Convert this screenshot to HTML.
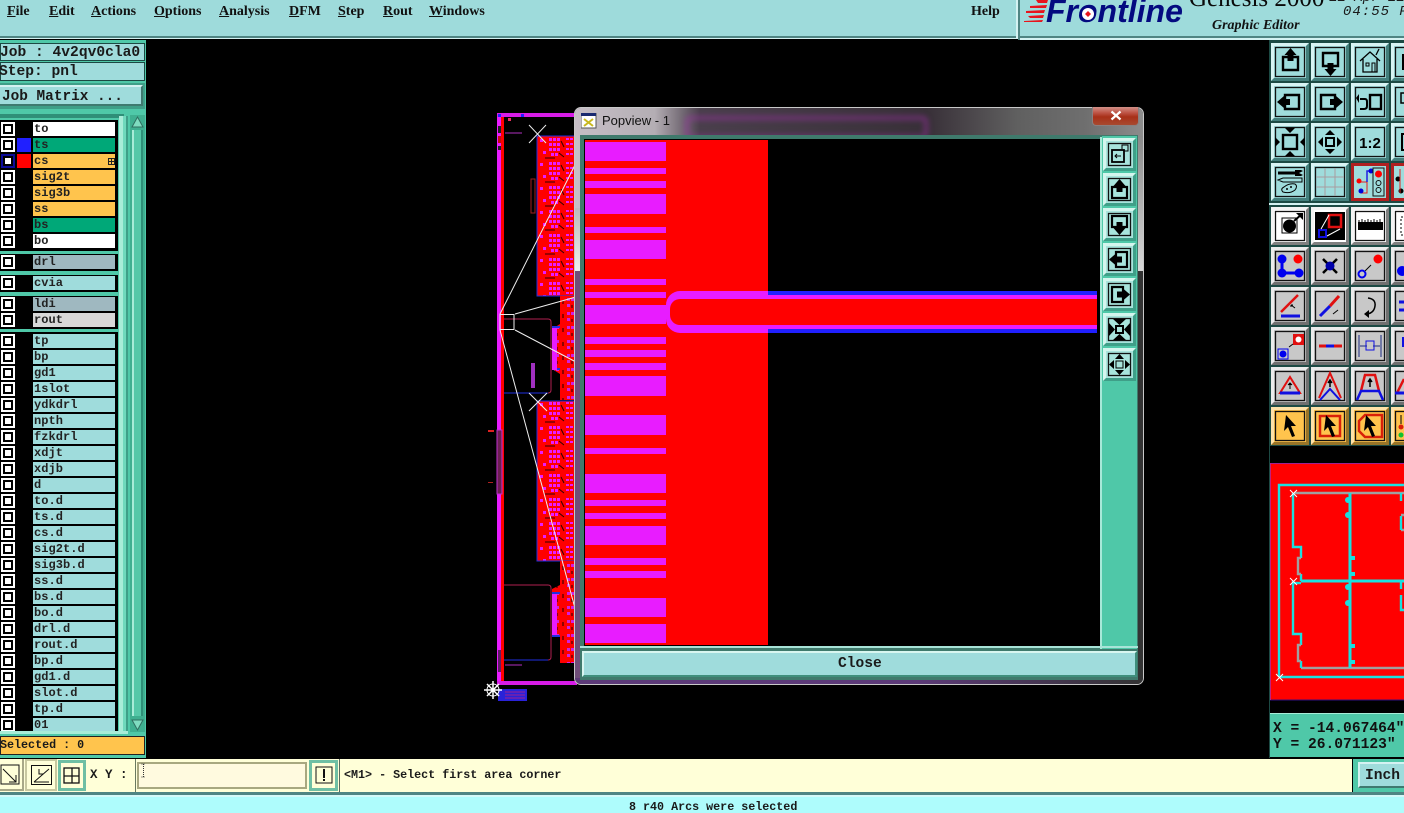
<!DOCTYPE html>
<html><head><meta charset="utf-8"><title>Genesis 2000</title>
<style>
html,body{margin:0;padding:0;background:#000;width:1404px;height:813px;overflow:hidden}
#r{position:relative;width:1404px;height:813px;overflow:hidden;background:#000}
#r div,#r span.a,#r svg.a{position:absolute}
.m{font:bold 14px/16px "Liberation Serif",serif;color:#111;top:4px;white-space:nowrap}
.mono{font-family:"Liberation Mono",monospace;font-weight:bold;color:#1a1a1a;white-space:pre}
.j{font-size:14.6px;line-height:16px}
.l{left:33px;width:82px;height:14px;font:bold 12px/14px "Liberation Mono",monospace;color:#222;text-indent:1px;letter-spacing:.05px;white-space:pre;overflow:hidden}
.c{left:1px;width:14px;height:14px;background:#fff}
.c:after{content:"";position:absolute;left:2px;top:2px;width:6px;height:6px;border:2px solid #000;background:#fff}
.t{background:#9fdcdc}.g{background:#00a878}.o{background:#ffc44d}.w{background:#fff}.s{background:#9fb8c0}
.bt{box-sizing:border-box;width:38px;height:38px;border:3px solid;border-color:#d8f4f4 #437f7c #437f7c #d8f4f4;background:#9fdcdc}
.gy{border-color:#ececec #707070 #707070 #ececec;background:#c8c8c8}
.wh{border-color:#f4f4f4 #808080 #808080 #f4f4f4;background:#fff}
.yl{border-color:#ffe2a8 #987428 #987428 #ffe2a8;background:#ffc44d}
.pb{box-sizing:border-box;width:33px;height:33px;border:3px solid;border-color:#d4f6ee #3f9f88 #3f9f88 #d4f6ee;background:#a8e4dc}
.bt svg,.pb svg{position:absolute;left:-3px;top:-3px;width:38px;height:38px;overflow:visible}
.pb svg{width:33px;height:33px}
.bt svg>rect:first-child,.pb svg>rect:first-child{stroke-width:1.3}
</style></head><body>
<div id="r">

<!-- PCB behind -->
<svg class="a" style="left:0;top:0" width="1404" height="813" viewBox="0 0 1404 813">
<defs>
<pattern id="pc" x="537" y="136" width="38" height="24" patternUnits="userSpaceOnUse">
<rect width="38" height="24" fill="#f00"/>
<g fill="#e81cff">
<rect x="3" y="3" width="3" height="3"/>
<rect x="12" y="2" width="3" height="3"/><rect x="16" y="2" width="3" height="3"/><rect x="20" y="2" width="3" height="3"/>
<rect x="12" y="7" width="3" height="3"/><rect x="16" y="7" width="3" height="3"/><rect x="20" y="7" width="3" height="3"/>
<rect x="12" y="12" width="3" height="3"/><rect x="16" y="12" width="3" height="3"/><rect x="20" y="12" width="3" height="3"/>
<rect x="14" y="17" width="3" height="3"/><rect x="18" y="17" width="3" height="3"/>
<rect x="29" y="2" width="3" height="2"/><rect x="33" y="2" width="3" height="2"/><rect x="29" y="7" width="3" height="2"/><rect x="33" y="7" width="3" height="2"/><rect x="29" y="12" width="3" height="2"/><rect x="33" y="12" width="3" height="2"/><rect x="29" y="17" width="3" height="2"/><rect x="33" y="17" width="3" height="2"/>
<rect x="6" y="15" width="3" height="3"/>
</g>
<path d="M8 22h10M24 5l3 6M22 17l5 4" stroke="#300" stroke-width="1"/>
</pattern>
<pattern id="pd" x="560" y="296" width="15" height="14" patternUnits="userSpaceOnUse">
<rect width="15" height="14" fill="#f00"/>
<g fill="#d020e0"><rect x="7" y="2" width="3" height="3"/><rect x="11" y="2" width="3" height="3"/><rect x="7" y="8" width="3" height="3"/></g>
<path d="M3 4v4M12 9v3" stroke="#200"/>
</pattern>
</defs>
<rect x="497" y="113" width="4" height="572" fill="#e81cff"/>
<rect x="501" y="117" width="3" height="564" fill="#f00"/>
<rect x="497" y="113" width="80" height="4" fill="#d81ce8"/>
<rect x="497" y="681" width="80" height="4" fill="#d81ce8"/>
<rect x="498" y="114" width="3" height="3" fill="#2020ff"/><rect x="521" y="114" width="3" height="3" fill="#2020ff"/>
<rect x="508" y="118" width="3" height="3" fill="#f03060"/>
<rect x="498" y="126" width="3" height="7" fill="#222"/><rect x="498" y="136" width="3" height="7" fill="#c01010"/><rect x="498" y="146" width="3" height="4" fill="#222"/>
<path d="M505 133h17" stroke="#b030c0"/>
<path d="M505 665h17" stroke="#b030c0"/>
<rect x="498" y="650" width="3" height="22" fill="#222" opacity=".7"/>
<!-- red block 1 -->
<path d="M537 136h40v160h-40z" fill="url(#pc)" stroke="#2030e0"/>
<path d="M560 296h17v104h-17v-26l-8 -5v-40l8 -5z" fill="url(#pd)"/>
<rect x="552" y="328" width="5" height="42" fill="#e81cff"/>
<path d="M552 327h8M552 369h8" stroke="#2030e0" stroke-width="2"/>
<path d="M504 319h44q3 0 3 3v68q0 3-3 3h-44" fill="#000" stroke="#b02050"/>
<path d="M504 393h44" stroke="#2030e0"/>
<path d="M552 328h5v42h-5z" fill="#e81cff"/>
<rect x="531" y="179" width="4" height="34" fill="none" stroke="#a02020"/>
<rect x="531" y="363" width="4" height="25" fill="#a030c0"/>
<!-- red block 2 -->
<path d="M537 401h40v160h-40z" fill="url(#pc)" stroke="#2030e0"/>
<path d="M560 561h17v102h-17v-26l-8 -4v-44l8 -4z" fill="url(#pd)"/>
<path d="M504 585h44q3 0 3 3v69q0 3-3 3h-44" fill="#000" stroke="#b02050"/>
<path d="M504 660h44" stroke="#2030e0"/>
<rect x="552" y="593" width="5" height="43" fill="#e81cff"/>
<path d="M552 593h8M552 636h8" stroke="#2030e0" stroke-width="2"/>
<!-- marks -->
<rect x="497" y="430" width="5" height="64" fill="#6a2050" stroke="#c030d0"/>
<rect x="488" y="430" width="6" height="2" fill="#e02020"/><rect x="488" y="482" width="5" height="1" fill="#b02020"/>
<rect x="498" y="689" width="29" height="12" fill="#2a22d8"/>
<path d="M505 692h20M505 695h20M505 698h20" stroke="#a02090"/>
<!-- white lines -->
<g stroke="#eee" fill="none" stroke-width="1">
<path d="M529 125l17 18M546 125l-17 18"/>
<path d="M529 393l9 9 9-9M529 411l9-9 9 9"/>
<rect x="500" y="314.500" width="14" height="15"/>
<path d="M500 314L576 163M515 314L576 297M515 330L576 362M500 330L576 612"/>
</g>
<g stroke="#fff" stroke-width="1.500"><path d="M484 690h18M493 681v18M487 684l12 12M499 684l-12 12"/></g>
<circle cx="493" cy="690" r="6" fill="none" stroke="#fff"/>
</svg>

<!-- top bar -->
<div style="left:0;top:0;width:1404px;height:36px;background:#9edbdb"></div>
<div style="left:0;top:36px;width:1404px;height:2px;background:#4f8583"></div>
<div style="left:0;top:38px;width:1404px;height:1px;background:#d4f2f2"></div>
<div style="left:1016px;top:0;width:2px;height:38px;background:#d4f2f2"></div>
<div style="left:1018px;top:0;width:2px;height:40px;background:#4f8583"></div>
<div style="left:1020px;top:38px;width:384px;height:2px;background:#d4f2f2"></div>
<div class="m" style="left:7px"><u>F</u>ile</div>
<div class="m" style="left:49px"><u>E</u>dit</div>
<div class="m" style="left:91px"><u>A</u>ctions</div>
<div class="m" style="left:154px"><u>O</u>ptions</div>
<div class="m" style="left:219px"><u>A</u>nalysis</div>
<div class="m" style="left:289px"><u>D</u>FM</div>
<div class="m" style="left:338px"><u>S</u>tep</div>
<div class="m" style="left:383px"><u>R</u>out</div>
<div class="m" style="left:429px"><u>W</u>indows</div>
<div class="m" style="left:971px">Help</div>
<svg class="a" style="left:1024px;top:0" width="24" height="24"><g fill="#e8141c"><path d="M12 0h12l-1 3h-9zM6 6l17-1-1 3H6zM2 11l19-1-1 3H2zM4 16l16-1-1 3H6zM0 21l19-1-1 2H0z"/></g></svg>
<div style="left:1046px;top:-6px;font:italic bold 32px/34px 'Liberation Sans',sans-serif;color:#040a80;white-space:nowrap">Frontline</div>
<svg class="a" style="left:1079px;top:5px" width="18" height="18"><circle cx="9" cy="9" r="7" fill="#fff" stroke="#040a80" stroke-width="2"/><path d="M9 6l3 3-3 3-3-3z" fill="#e8141c"/></svg>
<div style="left:1189px;top:-15px;font:25px/28px 'Liberation Serif',serif;color:#0a0a0a;white-space:nowrap">Genesis 2000</div>
<div style="left:1212px;top:18px;font:italic bold 14px/16px 'Liberation Serif',serif;color:#111;white-space:nowrap">Graphic Editor</div>
<div class="mono" style="left:1329px;top:-9px;font-size:14px;line-height:14px;font-style:italic;font-weight:normal">11 Apr 11</div>
<div class="mono" style="left:1343px;top:4px;font-size:14px;line-height:16px;font-style:italic;letter-spacing:1px;font-weight:normal">04:55 P</div>

<!-- left panel -->
<div style="left:0;top:40px;width:146px;height:718px;background:#4fc8a8"></div>
<div style="left:0;top:43px;width:145px;height:18px;background:#9fdcdc;box-shadow:inset 0 0 0 1px #1c4a44"></div>
<div style="left:0;top:62px;width:145px;height:19px;background:#9fdcdc;box-shadow:inset 0 0 0 1px #1c4a44"></div>
<div class="mono j" style="left:0;top:45px">Job : 4v2qv0cla0</div>
<div class="mono j" style="left:-1px;top:64px">Step: pnl</div>
<div style="left:0;top:83px;width:145px;height:26px;background:#3f9f88"></div>
<div style="left:0;top:85px;width:143px;height:21px;box-sizing:border-box;border:2px solid;border-color:#d4f2f2 #3f7a70 #3f7a70 #d4f2f2;border-left:0;background:#9fdcdc"></div>
<div class="mono j" style="left:2px;top:89px;font-size:14.4px">Job Matrix ...</div>

<div style="left:0;top:114px;width:124px;height:4px;background:#2f8f78"></div>
<!-- list black groups -->
<div style="left:0;top:120px;width:118px;height:131px;background:#000"></div>
<div style="left:0;top:254px;width:118px;height:17px;background:#000"></div>
<div style="left:0;top:275px;width:118px;height:17px;background:#000"></div>
<div style="left:0;top:296px;width:118px;height:33px;background:#000"></div>
<div style="left:0;top:332px;width:118px;height:399px;background:#000"></div>
<div style="left:119px;top:116px;width:4px;height:617px;background:#a8ecd8"></div>
<div style="left:123px;top:116px;width:3px;height:617px;background:#6fd8bc"></div>
<div style="left:126px;top:116px;width:2px;height:617px;background:#3f9f88"></div>
<div style="left:0;top:731px;width:128px;height:3px;background:#a8ecd8"></div>
<div style="left:130px;top:115px;width:15px;height:617px;background:#3faf90"></div>
<div style="left:132px;top:130px;width:11px;height:586px;background:#55c8a8;box-shadow:inset 2px 0 0 #a8ecd8,inset -2px 0 0 #2f8f78"></div>
<svg class="a" style="left:130px;top:115px" width="15" height="14"><path d="M7.500 2L13 12H2z" fill="#7fdcc0" stroke="#2f6f60"/></svg>
<svg class="a" style="left:130px;top:718px" width="15" height="14"><path d="M7.500 12L13 2H2z" fill="#7fdcc0" stroke="#2f6f60"/></svg>

<!-- checkboxes and rows -->
<div class="c" style="top:122px"></div><div class="l w" style="top:122px">to</div>
<div class="c" style="top:138px"></div><div style="left:17px;top:138px;width:14px;height:14px;background:#2020ff"></div><div class="l g" style="top:138px">ts</div>
<div class="c" style="top:154px;background:#0c0c98"></div><div style="left:17px;top:154px;width:14px;height:14px;background:#f00"></div><div class="l o" style="top:154px">cs<span style="position:absolute;left:75px;top:4px;width:5px;height:5px;border:1px solid #222;background:linear-gradient(#222,#222) center/1px 100% no-repeat,linear-gradient(#222,#222) center/100% 1px no-repeat"></span></div>
<div class="c" style="top:170px"></div><div class="l o" style="top:170px">sig2t</div>
<div class="c" style="top:186px"></div><div class="l o" style="top:186px">sig3b</div>
<div class="c" style="top:202px"></div><div class="l o" style="top:202px">ss</div>
<div class="c" style="top:218px"></div><div class="l g" style="top:218px">bs</div>
<div class="c" style="top:234px"></div><div class="l w" style="top:234px">bo</div>
<div class="c" style="top:255px"></div><div class="l s" style="top:255px">drl</div>
<div class="c" style="top:276px"></div><div class="l t" style="top:276px">cvia</div>
<div class="c" style="top:297px"></div><div class="l s" style="top:297px">ldi</div>
<div class="c" style="top:313px"></div><div class="l" style="top:313px;background:#d8d8d8">rout</div>
<div class="c" style="top:334px"></div><div class="l t" style="top:334px">tp</div>
<div class="c" style="top:350px"></div><div class="l t" style="top:350px">bp</div>
<div class="c" style="top:366px"></div><div class="l t" style="top:366px">gd1</div>
<div class="c" style="top:382px"></div><div class="l t" style="top:382px">1slot</div>
<div class="c" style="top:398px"></div><div class="l t" style="top:398px">ydkdrl</div>
<div class="c" style="top:414px"></div><div class="l t" style="top:414px">npth</div>
<div class="c" style="top:430px"></div><div class="l t" style="top:430px">fzkdrl</div>
<div class="c" style="top:446px"></div><div class="l t" style="top:446px">xdjt</div>
<div class="c" style="top:462px"></div><div class="l t" style="top:462px">xdjb</div>
<div class="c" style="top:478px"></div><div class="l t" style="top:478px">d</div>
<div class="c" style="top:494px"></div><div class="l t" style="top:494px">to.d</div>
<div class="c" style="top:510px"></div><div class="l t" style="top:510px">ts.d</div>
<div class="c" style="top:526px"></div><div class="l t" style="top:526px">cs.d</div>
<div class="c" style="top:542px"></div><div class="l t" style="top:542px">sig2t.d</div>
<div class="c" style="top:558px"></div><div class="l t" style="top:558px">sig3b.d</div>
<div class="c" style="top:574px"></div><div class="l t" style="top:574px">ss.d</div>
<div class="c" style="top:590px"></div><div class="l t" style="top:590px">bs.d</div>
<div class="c" style="top:606px"></div><div class="l t" style="top:606px">bo.d</div>
<div class="c" style="top:622px"></div><div class="l t" style="top:622px">drl.d</div>
<div class="c" style="top:638px"></div><div class="l t" style="top:638px">rout.d</div>
<div class="c" style="top:654px"></div><div class="l t" style="top:654px">bp.d</div>
<div class="c" style="top:670px"></div><div class="l t" style="top:670px">gd1.d</div>
<div class="c" style="top:686px"></div><div class="l t" style="top:686px">slot.d</div>
<div class="c" style="top:702px"></div><div class="l t" style="top:702px">tp.d</div>
<div class="c" style="top:718px;height:13px;overflow:hidden"></div><div class="l t" style="top:718px;height:13px">01</div>

<div style="left:0;top:736px;width:145px;height:19px;box-sizing:border-box;border:1px solid #222;background:#ffc44d"></div>
<div class="mono" style="left:0;top:738px;font-size:11.700px;line-height:15px">Selected : 0</div>

<!-- right toolbar -->
<div style="left:1269px;top:40px;width:135px;height:167px;background:#1c4a44"></div>
<div style="left:1269px;top:203px;width:135px;height:2px;background:#d4f2f2"></div>
<div style="left:1269px;top:205px;width:135px;height:241px;background:#1c4a44"></div>
<div style="left:1269px;top:446px;width:1px;height:312px;background:#1c4a44"></div>

<div class="bt" style="left:1271px;top:43px"><svg viewBox="0 0 38 38"><rect x="4.500" y="4.500" width="29" height="29" fill="none" stroke="#111"/><path d="M12 14h15v13H12z" fill="none" stroke="#000" stroke-width="2.400"/><path d="M19.500 5l6 7h-3v6h-6v-6h-3z"/></svg></div>
<div class="bt" style="left:1311px;top:43px"><svg viewBox="0 0 38 38"><rect x="4.500" y="4.500" width="29" height="29" fill="none" stroke="#111"/><path d="M12 10h15v13H12z" fill="none" stroke="#000" stroke-width="2.400"/><path d="M19.500 33l-6-7h3v-6h6v6h3z"/></svg></div>
<div class="bt" style="left:1351px;top:43px"><svg viewBox="0 0 38 38"><rect x="4.500" y="4.500" width="29" height="29" fill="none" stroke="#111"/><path d="M9 18L19 9l10 9M12 16v13h14V16M25 12l3-6" fill="none" stroke="#000" stroke-width="1.300"/><rect x="15" y="20" width="3" height="3" fill="none" stroke="#000"/><path d="M21 29v-9h3v9" fill="none" stroke="#000"/></svg></div>
<div class="bt" style="left:1391px;top:43px"><svg viewBox="0 0 38 38"><rect x="4.500" y="4.500" width="29" height="29" fill="none" stroke="#111"/><path d="M12 12h16v14H12z" fill="none" stroke="#000" stroke-width="2"/></svg></div>

<div class="bt" style="left:1271px;top:83px"><svg viewBox="0 0 38 38"><rect x="4.500" y="4.500" width="29" height="29" fill="none" stroke="#111"/><path d="M14 12h14v14H14z" fill="none" stroke="#000" stroke-width="2.400"/><path d="M6 19l7-6v3h6v6h-6v3z"/></svg></div>
<div class="bt" style="left:1311px;top:83px"><svg viewBox="0 0 38 38"><rect x="4.500" y="4.500" width="29" height="29" fill="none" stroke="#111"/><path d="M10 12h14v14H10z" fill="none" stroke="#000" stroke-width="2.400"/><path d="M32 19l-7-6v3h-6v6h6v3z"/></svg></div>
<div class="bt" style="left:1351px;top:83px"><svg viewBox="0 0 38 38"><rect x="4.500" y="4.500" width="29" height="29" fill="none" stroke="#111"/><rect x="19" y="12" width="11" height="14" fill="none" stroke="#000" stroke-width="2.400"/><path d="M9 16h5q2 0 2 3v4q0 3-3 3H9" fill="none" stroke="#000" stroke-width="2"/><path d="M8 11v9l-3-5z"/></svg></div>
<div class="bt" style="left:1391px;top:83px"><svg viewBox="0 0 38 38"><rect x="4.500" y="4.500" width="29" height="29" fill="none" stroke="#111"/><path d="M10 10h12v10H10z" fill="none" stroke="#000" stroke-width="1.500"/></svg></div>

<div class="bt" style="left:1271px;top:123px"><svg viewBox="0 0 38 38"><rect x="4.500" y="4.500" width="29" height="29" fill="none" stroke="#111"/><rect x="12" y="12" width="14" height="14" fill="none" stroke="#000" stroke-width="2.400"/><path d="M14 5h10l-5 5zM14 33h10l-5-5zM4 14v10l5-5zM34 14v10l-5-5z"/></svg></div>
<div class="bt" style="left:1311px;top:123px"><svg viewBox="0 0 38 38"><rect x="4.500" y="4.500" width="29" height="29" fill="none" stroke="#111"/><rect x="15" y="15" width="8" height="8" fill="none" stroke="#000" stroke-width="2"/><path d="M14 12h10l-5-5zM14 26h10l-5 5zM12 14v10l-5-5zM26 14v10l5-5z"/></svg></div>
<div class="bt" style="left:1351px;top:123px"><svg viewBox="0 0 38 38"><rect x="4.500" y="4.500" width="29" height="29" fill="none" stroke="#111"/><text x="19" y="25" text-anchor="middle" font-family="Liberation Sans,sans-serif" font-weight="bold" font-size="15">1:2</text></svg></div>
<div class="bt" style="left:1391px;top:123px"><svg viewBox="0 0 38 38"><rect x="4.500" y="4.500" width="29" height="29" fill="none" stroke="#111"/><rect x="11" y="11" width="16" height="16" fill="none" stroke="#000" stroke-width="2"/></svg></div>

<div class="bt" style="left:1271px;top:163px"><svg viewBox="0 0 38 38"><rect x="4.500" y="4.500" width="29" height="29" fill="none" stroke="#111"/><path d="M7 10h17" stroke="#000" stroke-width="3"/><path d="M24 7h6l2 1-4 2 4 2-2 1h-6z" fill="#000"/><path d="M7 17l5-2h19v4H12z" fill="none" stroke="#000"/><path d="M12 29q-3-3 1-5 5-4 11-3 3 2 0 6-5 4-12 2z" fill="none" stroke="#000"/><circle cx="16" cy="26" r="1"/><circle cx="20" cy="24" r="1"/></svg></div>
<div class="bt" style="left:1311px;top:163px"><svg viewBox="0 0 38 38"><rect x="4.500" y="4.500" width="29" height="29" fill="none" stroke="#111"/><path d="M5 14h28M5 24h28M14 5v28M24 5v28" stroke="#a89ca0"/></svg></div>
<div class="bt" style="left:1351px;top:163px;border-color:#b02020;background:#9fdcdc"><svg viewBox="0 0 38 38"><rect x="2" y="2" width="34" height="34" fill="none" stroke="#b02020" stroke-width="3"/><path d="M8 19h8v11h-6" fill="none" stroke="#e02020" stroke-width="1"/><path d="M16 19V8h4" fill="none" stroke="#2020e0" stroke-width="1.500"/><circle cx="8" cy="18" r="2.500" fill="#f00"/><circle cx="20" cy="8" r="2.500" fill="#00d"/><circle cx="10" cy="28" r="2.500" fill="#00d"/><rect x="22" y="5" width="11" height="28" fill="none" stroke="#111"/><circle cx="27.500" cy="11" r="3.500" fill="#f00"/><circle cx="27.500" cy="20" r="2.500" fill="none" stroke="#111"/><circle cx="27.500" cy="27" r="2.500" fill="none" stroke="#111"/></svg></div>
<div class="bt" style="left:1391px;top:163px;border-color:#b02020"><svg viewBox="0 0 38 38"><rect x="2" y="2" width="34" height="34" fill="none" stroke="#b02020" stroke-width="3"/><circle cx="7" cy="16" r="2.500"/><circle cx="10" cy="28" r="2.500"/><path d="M9 6v24" stroke="#e02020"/></svg></div>

<!-- white row -->
<div class="bt wh" style="left:1271px;top:207px"><svg viewBox="0 0 38 38"><rect x="4.500" y="4.500" width="29" height="29" fill="none" stroke="#111"/><rect x="11" y="11" width="15" height="15" fill="none" stroke="#000"/><circle cx="18.500" cy="19" r="6.500"/><path d="M23 14l8-7" stroke="#000" stroke-width="2"/><path d="M25 6h7v7z"/></svg></div>
<div class="bt wh" style="left:1311px;top:207px"><svg viewBox="0 0 38 38"><rect x="4" y="5" width="30" height="28"/><rect x="18" y="8" width="12" height="12" fill="none" stroke="#e01010" stroke-width="2.500"/><rect x="8" y="23" width="7" height="7" fill="none" stroke="#1010e0" stroke-width="2"/><path d="M10 22l8-14M16 29l13-7" stroke="#fff"/></svg></div>
<div class="bt wh" style="left:1351px;top:207px"><svg viewBox="0 0 38 38"><rect x="4.500" y="4.500" width="29" height="29" fill="none" stroke="#111"/><rect x="7" y="15" width="25" height="8"/><path d="M8 13v2M11 12v3M14 13v2M17 12v3M20 13v2M23 12v3M26 13v2M29 12v3" stroke="#000"/></svg></div>
<div class="bt wh" style="left:1391px;top:207px"><svg viewBox="0 0 38 38"><rect x="4.500" y="4.500" width="29" height="29" fill="none" stroke="#111"/><rect x="10" y="10" width="18" height="18" fill="none" stroke="#000" stroke-dasharray="2 2"/></svg></div>

<!-- grey rows -->
<div class="bt gy" style="left:1271px;top:247px"><svg viewBox="0 0 38 38"><rect x="4.500" y="4.500" width="29" height="29" fill="none" stroke="#111"/><path d="M11 12v14h18" fill="none" stroke="#00e" stroke-width="3"/><circle cx="11" cy="12" r="4.500" fill="#00e"/><circle cx="11" cy="26" r="4.500" fill="#00e"/><circle cx="28" cy="26" r="4.500" fill="#00e"/><circle cx="27" cy="12" r="4.500" fill="#f00"/></svg></div>
<div class="bt gy" style="left:1311px;top:247px"><svg viewBox="0 0 38 38"><rect x="4.500" y="4.500" width="29" height="29" fill="none" stroke="#111"/><path d="M12 12l14 14M26 12L12 26" stroke="#000" stroke-width="2.500"/><circle cx="19" cy="19" r="4.500" fill="#00a"/></svg></div>
<div class="bt gy" style="left:1351px;top:247px"><svg viewBox="0 0 38 38"><rect x="4.500" y="4.500" width="29" height="29" fill="none" stroke="#111"/><circle cx="11" cy="27" r="3.500" fill="none" stroke="#00e" stroke-width="2"/><circle cx="27" cy="12" r="4.500" fill="#f00"/><path d="M14 24l6-6" stroke="#000"/></svg></div>
<div class="bt gy" style="left:1391px;top:247px"><svg viewBox="0 0 38 38"><rect x="4.500" y="4.500" width="29" height="29" fill="none" stroke="#111"/><circle cx="11" cy="24" r="5" fill="#00e"/></svg></div>

<div class="bt gy" style="left:1271px;top:287px"><svg viewBox="0 0 38 38"><rect x="4.500" y="4.500" width="29" height="29" fill="none" stroke="#111"/><path d="M10 25L27 8" stroke="#e01010" stroke-width="2.500"/><path d="M10 29h19" stroke="#1010e0" stroke-width="3"/><path d="M24 21l-4-3M20 18v2M20 18h2" stroke="#000"/></svg></div>
<div class="bt gy" style="left:1311px;top:287px"><svg viewBox="0 0 38 38"><rect x="4.500" y="4.500" width="29" height="29" fill="none" stroke="#111"/><path d="M9 29l10-10" stroke="#1010e0" stroke-width="3"/><path d="M19 19l9-10" stroke="#e01010" stroke-width="3"/><path d="M22 27l5-4" stroke="#000"/></svg></div>
<div class="bt gy" style="left:1351px;top:287px"><svg viewBox="0 0 38 38"><rect x="4.500" y="4.500" width="29" height="29" fill="none" stroke="#111"/><path d="M17 11q8 1 7 8t-8 8" fill="none" stroke="#000" stroke-width="1.500"/><path d="M18 23v8l-5-4z"/></svg></div>
<div class="bt gy" style="left:1391px;top:287px"><svg viewBox="0 0 38 38"><rect x="4.500" y="4.500" width="29" height="29" fill="none" stroke="#111"/><path d="M8 15h24M8 23h24" stroke="#1010e0" stroke-width="3"/></svg></div>

<div class="bt gy" style="left:1271px;top:327px"><svg viewBox="0 0 38 38"><rect x="4.500" y="4.500" width="29" height="29" fill="none" stroke="#111"/><rect x="22" y="7" width="11" height="11" fill="#e01010"/><circle cx="27.500" cy="12.500" r="3" fill="#fff"/><rect x="7" y="22" width="10" height="10" fill="none" stroke="#00e"/><circle cx="12" cy="27" r="3.500" fill="#00e"/><path d="M18 20l4-3" stroke="#000"/></svg></div>
<div class="bt gy" style="left:1311px;top:327px"><svg viewBox="0 0 38 38"><rect x="4.500" y="4.500" width="29" height="29" fill="none" stroke="#111"/><path d="M8 19h23" stroke="#e01010" stroke-width="3"/><path d="M15 19h8" stroke="#1010e0" stroke-width="3"/></svg></div>
<div class="bt gy" style="left:1351px;top:327px"><svg viewBox="0 0 38 38"><rect x="4.500" y="4.500" width="29" height="29" fill="none" stroke="#111"/><path d="M8 8v22M30 8v22M9 19h7M22 19h7" stroke="#1a2a80"/><rect x="15" y="14" width="8" height="9" fill="none" stroke="#1010e0"/></svg></div>
<div class="bt gy" style="left:1391px;top:327px"><svg viewBox="0 0 38 38"><rect x="4.500" y="4.500" width="29" height="29" fill="none" stroke="#111"/><path d="M11 10h14v10h-4v8h-6v-8h-4z" fill="#1010e0"/></svg></div>

<div class="bt gy" style="left:1271px;top:367px"><svg viewBox="0 0 38 38"><rect x="4.500" y="4.500" width="29" height="29" fill="none" stroke="#111"/><path d="M19 10L29 26H9z" fill="none" stroke="#e01010" stroke-width="2"/><path d="M9 26h20" stroke="#1010e0" stroke-width="3"/><path d="M19 16v6M17 18l2-2 2 2" stroke="#000"/></svg></div>
<div class="bt gy" style="left:1311px;top:367px"><svg viewBox="0 0 38 38"><rect x="4.500" y="4.500" width="29" height="29" fill="none" stroke="#111"/><path d="M8 31L19 6l11 25" fill="none" stroke="#e01010" stroke-width="2"/><path d="M9 33l10-11 10 11" fill="none" stroke="#1010e0" stroke-width="2"/><path d="M19 14v6M17 16l2-3 2 3" stroke="#000" stroke-width="1.500"/></svg></div>
<div class="bt gy" style="left:1351px;top:367px"><svg viewBox="0 0 38 38"><rect x="4.500" y="4.500" width="29" height="29" fill="none" stroke="#111"/><path d="M10 24l4-16h10l4 16" fill="none" stroke="#e01010" stroke-width="2.500"/><path d="M6 33l4-9h18l4 9" fill="none" stroke="#1010e0" stroke-width="2.500"/><path d="M19 13v7M17 15l2-3 2 3" stroke="#000" stroke-width="1.500"/></svg></div>
<div class="bt gy" style="left:1391px;top:367px"><svg viewBox="0 0 38 38"><rect x="4.500" y="4.500" width="29" height="29" fill="none" stroke="#111"/><path d="M6 26l7-14" stroke="#e01010" stroke-width="2.500"/><path d="M4 26h12" stroke="#1010e0" stroke-width="3"/></svg></div>

<!-- yellow row -->
<div class="bt yl" style="left:1271px;top:407px"><svg viewBox="0 0 38 38"><rect x="4.500" y="4.500" width="29" height="29" fill="none" stroke="#111"/><path d="M15 8l10 11h-5l4 10-3 1-4-10-4 4z"/></svg></div>
<div class="bt yl" style="left:1311px;top:407px"><svg viewBox="0 0 38 38"><rect x="4.500" y="4.500" width="29" height="29" fill="none" stroke="#111"/><rect x="9" y="9" width="20" height="20" fill="none" stroke="#d82008" stroke-width="2.500"/><path d="M15 8l10 11h-5l4 10-3 1-4-10-4 4z"/></svg></div>
<div class="bt yl" style="left:1351px;top:407px"><svg viewBox="0 0 38 38"><rect x="4.500" y="4.500" width="29" height="29" fill="none" stroke="#111"/><path d="M14 8h17v22H14l-6-6V14z" fill="none" stroke="#d82008" stroke-width="2.500"/><path d="M15 8l10 11h-5l4 10-3 1-4-10-4 4z"/></svg></div>
<div class="bt yl" style="left:1391px;top:407px"><svg viewBox="0 0 38 38"><rect x="4.500" y="4.500" width="29" height="29" fill="none" stroke="#111"/><circle cx="10" cy="20" r="2.500" fill="#d82008"/><circle cx="10" cy="28" r="2.500" fill="#10c030"/><path d="M10 8v9" stroke="#000"/></svg></div>

<!-- mini map -->
<svg class="a" style="left:1270px;top:463px" width="134" height="238" viewBox="1270 463 134 238">
<rect x="1270" y="463" width="134" height="237" fill="#f00"/>
<path d="M1270 463.500h134" stroke="#a02090"/>
<path d="M1270 700h134" stroke="#301080"/>
<path d="M1270.500 463v237" stroke="#c02080"/>
<path d="M1279 677V485h125M1279 677h125" fill="none" stroke="#19e0e0" stroke-width="2.400"/>
<path d="M1294 493h110" stroke="#a0a0a0" stroke-width="2.600"/>
<path d="M1301 668h103" stroke="#a0a0a0" stroke-width="2.600"/>
<g fill="none" stroke="#19e0e0" stroke-width="2.400">
<path d="M1293 493v54h8v11M1301 581v-7M1293 581v53h8v11M1301 668v-7"/>
<path d="M1301 581h103" stroke-width="3"/>
<path d="M1293 583h8"/>
<path d="M1350 493v175" stroke-width="3"/>
<path d="M1401 493v8M1401 581v8"/>
</g>
<g fill="none" stroke="#a0a0a0" stroke-width="2.400"><path d="M1301 558h-3v16h3M1301 645h-3v16h3M1401 515h3M1401 530h3"/></g>
<path d="M1401 530v-14M1401 595v15h3" fill="none" stroke="#19e0e0" stroke-width="2.400"/>
<g fill="#19e0e0"><circle cx="1348" cy="500" r="3"/><circle cx="1348" cy="515" r="3"/><rect x="1350" y="556" width="5" height="4"/><rect x="1350" y="572" width="5" height="4"/><circle cx="1348" cy="587" r="3"/><circle cx="1348" cy="603" r="3"/><rect x="1350" y="644" width="5" height="4"/><rect x="1350" y="660" width="5" height="4"/></g>
<g stroke="#fff" stroke-width="1"><path d="M1290 490l7 7M1297 490l-7 7M1290 578l7 7M1297 578l-7 7M1276 674l7 7M1283 674l-7 7"/></g>
</svg>
<div style="left:1270px;top:713px;width:134px;height:44px;background:#4fc8a8;box-shadow:inset 0 1px 0 #a8ecd8"></div>
<div class="mono j" style="left:1273px;top:721px;color:#111">X = -14.067464"</div>
<div class="mono j" style="left:1273px;top:737px;color:#111">Y = 26.071123"</div>

<!-- bottom bar -->
<div style="left:0;top:759px;width:1404px;height:33px;background:#ffffd8"></div>
<div style="left:0;top:792px;width:1404px;height:3px;background:#4f8583"></div>
<div style="left:0;top:795px;width:1404px;height:2px;background:#d4f8f8"></div>
<div style="left:0;top:797px;width:1404px;height:16px;background:#aefcfc"></div>
<div style="left:0;top:759px;width:24px;height:32px;background:#ffffd8;box-shadow:inset -2px -2px 0 #a8a888"></div>
<svg class="a" style="left:0;top:764px" width="24" height="22"><rect x="1" y="1" width="18" height="19" fill="none" stroke="#111"/><path d="M3 5l13 13M16 11v7H9" fill="none" stroke="#111"/></svg>
<div style="left:25px;top:759px;width:32px;height:32px;background:#ffffd8;box-shadow:inset 0 0 0 2px #c8c8a0"></div>
<svg class="a" style="left:30px;top:764px" width="24" height="22"><rect x="1.500" y="1.500" width="20" height="19" fill="none" stroke="#111"/><path d="M4 18L19 5M4 18h15M9 5v5h4" fill="none" stroke="#111"/></svg>
<div style="left:58px;top:760px;width:28px;height:31px;box-sizing:border-box;border:3px solid #6fbfa4;background:#ffffd8"></div>
<svg class="a" style="left:62px;top:766px" width="20" height="20"><rect x="2" y="2" width="15" height="15" fill="none" stroke="#111" stroke-width="1.300"/><path d="M2 10h15M10 2v15" stroke="#111" stroke-width="1.300"/></svg>
<div class="mono" style="left:90px;top:767px;font-size:12.500px;line-height:16px">X Y :</div>
<div style="left:135px;top:759px;width:172px;height:33px;background:#ffffd8;border-left:1px solid #6a7a60"></div>
<div style="left:137px;top:762px;width:170px;height:27px;box-sizing:border-box;border:2px solid #a8a880;background:#fffadf"></div>
<svg class="a" style="left:141px;top:763px" width="5" height="16"><path d="M.500 1h4M2.500 1v13M.500 14h4" stroke="#333" stroke-dasharray="1 1"/></svg>
<div style="left:309px;top:760px;width:29px;height:31px;box-sizing:border-box;border:3px solid #6fbfa4;background:#ffffd8"></div>
<svg class="a" style="left:315px;top:766px" width="18" height="18"><rect x="1" y="1" width="16" height="16" fill="none" stroke="#111"/><path d="M9 3v9" stroke="#111" stroke-width="2"/><rect x="8" y="13" width="2" height="2" fill="#111"/></svg>
<div style="left:339px;top:759px;width:1px;height:33px;background:#5a6a60"></div>
<div class="mono" style="left:344px;top:767px;font-size:11.700px;line-height:16px">&lt;M1&gt; - Select first area corner</div>
<div style="left:1352px;top:759px;width:1px;height:33px;background:#000"></div>
<div style="left:1353px;top:759px;width:51px;height:33px;background:#4fc8a8"></div>
<div style="left:1358px;top:762px;width:46px;height:26px;box-sizing:border-box;border:2px solid;border-color:#d4f2f2 #3f7a70 #3f7a70 #d4f2f2;border-right:0;background:#9fdcdc"></div>
<div class="mono" style="left:1365px;top:768px;font-size:14.600px;line-height:16px">Inch</div>
<div class="mono" style="left:629px;top:800px;font-size:11.700px;line-height:14px">8 r40 Arcs were selected</div>

<!-- Popview window -->
<div style="left:574px;top:107px;width:570px;height:578px;border-radius:7px;box-sizing:border-box;border:1px solid #c8c8c8;background:linear-gradient(90deg,#6f4d78 0,#6f4d78 1%,#444 50%,#333 100%);overflow:hidden">
 <div style="left:0;top:0;width:568px;height:163px;background:linear-gradient(90deg,#c6bec6 0,#b4aeb4 14%,#4a3f4c 22%,#383038 62%,#606060 78%,#6f6f6f 90%,#8c8c8c 100%)"></div>
 <div style="left:0;top:100px;width:6px;height:63px;background:linear-gradient(180deg,#bbb,#eee)"></div>
 <div style="right:0;top:28px;width:6px;height:135px;background:linear-gradient(180deg,#8a8a8a,#d8d8d8)"></div>
 <div style="left:110px;top:8px;width:235px;height:15px;border:4px solid #a030a8;border-radius:5px;filter:blur(3px);opacity:.55"></div>
 <div style="left:0;top:570px;width:568px;height:8px;background:linear-gradient(90deg,#5c3a78,#5c3a78 60%,#333)"></div>
</div>
<svg class="a" style="left:581px;top:113px" width="16" height="16"><rect x="0" y="0" width="15" height="15" fill="#fff" stroke="#555"/><rect x="0" y="0" width="15" height="3" fill="#1a2a70"/><path d="M3 6l9 7M12 6l-9 7" stroke="#c8b820" stroke-width="2"/></svg>
<div style="left:602px;top:113px;font:13px/15px 'Liberation Sans',sans-serif;color:#111;white-space:nowrap">Popview - 1</div>
<div style="left:1092px;top:107px;width:47px;height:19px;box-sizing:border-box;border:1px solid #8a8080;border-top:0;border-radius:0 0 4px 4px;background:linear-gradient(180deg,#d09088 0,#c0584a 30%,#a83018 55%,#a84a30 100%)"></div>
<svg class="a" style="left:1110px;top:110px" width="12" height="11"><path d="M1.500 1.500l9 8M10.500 1.500l-9 8" stroke="#fff" stroke-width="2.200"/></svg>

<div style="left:580px;top:135px;width:558px;height:545px;background:#3f7a6c"></div>
<div style="left:584px;top:139px;width:516px;height:507px;background:#000"></div>
<svg class="a" style="left:584px;top:139px" width="516" height="507" viewBox="584 139 516 507">
<rect x="585" y="140" width="183" height="505" fill="#f00"/>
<g fill="#e81cff">
<rect x="585" y="142" width="81" height="19"/><rect x="585" y="168" width="81" height="6"/><rect x="585" y="181" width="81" height="7"/><rect x="585" y="194" width="81" height="20"/><rect x="585" y="227" width="81" height="6"/><rect x="585" y="240" width="81" height="19"/><rect x="585" y="279" width="81" height="6"/><rect x="585" y="292" width="81" height="6"/><rect x="585" y="305" width="81" height="19"/><rect x="585" y="337" width="81" height="7"/><rect x="585" y="350" width="81" height="7"/><rect x="585" y="363" width="81" height="7"/><rect x="585" y="376" width="81" height="20"/><rect x="585" y="415" width="81" height="20"/><rect x="585" y="448" width="81" height="6"/><rect x="585" y="474" width="81" height="19"/><rect x="585" y="500" width="81" height="6"/><rect x="585" y="513" width="81" height="6"/><rect x="585" y="526" width="81" height="19"/><rect x="585" y="558" width="81" height="7"/><rect x="585" y="571" width="81" height="7"/><rect x="585" y="598" width="81" height="19"/><rect x="585" y="624" width="81" height="19"/>
</g>
<rect x="768" y="291" width="329" height="42" fill="#2020ff"/>
<rect x="768" y="295" width="329" height="34" fill="#e81cff"/>
<path d="M680 291h88v42h-88a14 14 0 0 1-14-14v-14a14 14 0 0 1 14-14z" fill="#e81cff"/>
<path d="M1097 299H680a10 10 0 0 0-10 10v6a10 10 0 0 0 10 10H1097z" fill="#f00"/>
</svg>
<div style="left:1100px;top:137px;width:2px;height:512px;background:#a8e8d8"></div>
<div style="left:1102px;top:136px;width:35px;height:513px;background:#4fc8a8"></div>
<div style="left:580px;top:646px;width:558px;height:2px;background:#a8e4d8"></div>
<div style="left:582px;top:651px;width:555px;height:26px;box-sizing:border-box;border:2px solid;border-color:#d8f6f0 #3f8f7c #3f8f7c #d8f6f0;background:#9fdcdc"></div>
<div class="mono" style="left:838px;top:656px;font-size:14.600px;line-height:16px">Close</div>

<div class="pb" style="left:1103px;top:138px"><svg viewBox="0 0 33 33"><rect x="5.500" y="5.500" width="22" height="22" fill="none" stroke="#111"/><rect x="9" y="12" width="12" height="12" fill="none" stroke="#000" stroke-width="1.800"/><path d="M19 11V7h6v6h-4M18 18h-6M14 16l-2 2 2 2" fill="none" stroke="#000"/></svg></div>
<div class="pb" style="left:1103px;top:173px"><svg viewBox="0 0 33 33"><rect x="5.500" y="5.500" width="22" height="22" fill="none" stroke="#111"/><path d="M9 14h15v11H9z" fill="none" stroke="#000" stroke-width="2.200"/><path d="M16.500 6l6 7h-3v6h-6v-6h-3z"/></svg></div>
<div class="pb" style="left:1103px;top:208px"><svg viewBox="0 0 33 33"><rect x="5.500" y="5.500" width="22" height="22" fill="none" stroke="#111"/><path d="M9 8h15v11H9z" fill="none" stroke="#000" stroke-width="2.200"/><path d="M16.500 27l-6-7h3v-6h6v6h3z"/></svg></div>
<div class="pb" style="left:1103px;top:243px"><svg viewBox="0 0 33 33"><rect x="5.500" y="5.500" width="22" height="22" fill="none" stroke="#111"/><path d="M13 9h11v15H13z" fill="none" stroke="#000" stroke-width="2.200"/><path d="M6 16.500l7-6v3h6v6h-6v3z"/></svg></div>
<div class="pb" style="left:1103px;top:278px"><svg viewBox="0 0 33 33"><rect x="5.500" y="5.500" width="22" height="22" fill="none" stroke="#111"/><path d="M9 9h11v15H9z" fill="none" stroke="#000" stroke-width="2.200"/><path d="M27 16.500l-7-6v3h-6v6h6v3z"/></svg></div>
<div class="pb" style="left:1103px;top:313px"><svg viewBox="0 0 33 33"><rect x="5.500" y="5.500" width="22" height="22" fill="none" stroke="#111"/><rect x="13" y="13" width="7" height="7" fill="none" stroke="#000" stroke-width="2"/><path d="M10 6h13l-6.500 6zM10 27h13l-6.500-6zM6 10v13l6-6.500zM27 10v13l-6-6.500z"/></svg></div>
<div class="pb" style="left:1103px;top:348px"><svg viewBox="0 0 33 33"><rect x="5.500" y="5.500" width="22" height="22" fill="none" stroke="#111"/><rect x="13" y="13" width="7" height="7" fill="none" stroke="#000"/><path d="M12 11h9l-4.500-5zM12 22h9l-4.500 5zM11 12v9l-5-4.500zM22 12v9l5-4.500z"/></svg></div>
</div>
</body></html>
